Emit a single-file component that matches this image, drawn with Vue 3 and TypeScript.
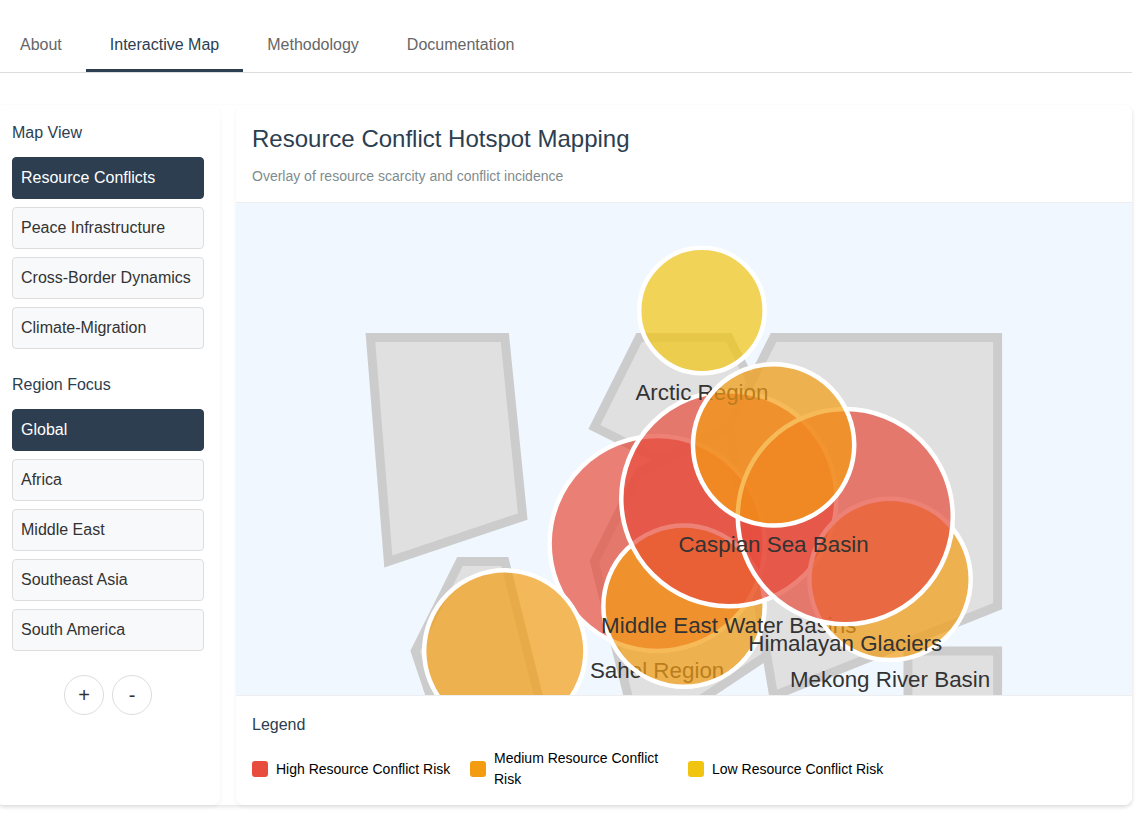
<script setup lang="ts">
import { ref } from 'vue'

type Level = 'high' | 'medium' | 'low'

interface Hotspot {
  name?: string
  x: number
  y: number
  r: number
  level: Level
}

const tabs: string[] = ['About', 'Interactive Map', 'Methodology', 'Documentation']
const views: string[] = ['Resource Conflicts', 'Peace Infrastructure', 'Cross-Border Dynamics', 'Climate-Migration']
const regions: string[] = ['Global', 'Africa', 'Middle East', 'Southeast Asia', 'South America']

const activeTab = ref('Interactive Map')
const activeView = ref('Resource Conflicts')
const activeRegion = ref('Global')

const continents: string[] = [
  '150,150 300,150 320,350 170,400',
  '250,400 300,400 350,600 250,650 200,500',
  '450,150 550,150 600,250 500,300 400,250',
  '450,300 550,250 600,500 450,600 400,400',
  '600,150 850,150 850,450 600,550 550,250',
  '750,500 850,500 850,600 750,600',
]

const hotspots: Hotspot[] = [
  { name: 'Sahel Region', x: 470, y: 380, r: 120, level: 'high' },
  { x: 500, y: 450, r: 90, level: 'medium' },
  { name: 'Middle East Water Basins', x: 550, y: 330, r: 120, level: 'high' },
  { name: 'Mekong River Basin', x: 730, y: 420, r: 90, level: 'medium' },
  { name: 'Himalayan Glaciers', x: 680, y: 350, r: 120, level: 'high' },
  { x: 300, y: 500, r: 90, level: 'medium' },
  { name: 'Arctic Region', x: 520, y: 120, r: 70, level: 'low' },
  { name: 'Caspian Sea Basin', x: 600, y: 270, r: 90, level: 'medium' },
]

const legend: { level: Level; label: string }[] = [
  { level: 'high', label: 'High Resource Conflict Risk' },
  { level: 'medium', label: 'Medium Resource Conflict Risk' },
  { level: 'low', label: 'Low Resource Conflict Risk' },
]
</script>

<template>
  <div class="page">
    <nav class="tabs">
      <button
        v-for="tab in tabs"
        :key="tab"
        type="button"
        class="tab"
        :class="{ active: tab === activeTab }"
        @click="activeTab = tab"
      >{{ tab }}</button>
    </nav>

    <div class="layout">
      <aside class="sidebar">
        <section class="group">
          <h3 class="heading">Map View</h3>
          <button
            v-for="view in views"
            :key="view"
            type="button"
            class="option"
            :class="{ active: view === activeView }"
            @click="activeView = view"
          >{{ view }}</button>
        </section>
        <section class="group">
          <h3 class="heading">Region Focus</h3>
          <button
            v-for="region in regions"
            :key="region"
            type="button"
            class="option"
            :class="{ active: region === activeRegion }"
            @click="activeRegion = region"
          >{{ region }}</button>
        </section>
        <div class="zoom">
          <button type="button" class="round">+</button>
          <button type="button" class="round">-</button>
        </div>
      </aside>

      <main class="panel">
        <header class="panel-head">
          <h2 class="title">Resource Conflict Hotspot Mapping</h2>
          <p class="subtitle">Overlay of resource scarcity and conflict incidence</p>
        </header>

        <div class="map">
          <svg class="world" viewBox="0 0 1000 600">
            <polygon v-for="points in continents" :key="points" class="land" :points="points" />
            <g v-for="(spot, index) in hotspots" :key="index">
              <circle class="spot" :class="spot.level" :cx="spot.x" :cy="spot.y" :r="spot.r" />
              <text v-if="spot.name" class="spot-label" :x="spot.x" :y="spot.y + spot.r + 30">{{ spot.name }}</text>
            </g>
          </svg>
        </div>

        <footer class="legend">
          <h3 class="heading">Legend</h3>
          <ul class="legend-list">
            <li v-for="item in legend" :key="item.level" class="legend-item">
              <span class="swatch" :class="item.level"></span>
              <span>{{ item.label }}</span>
            </li>
          </ul>
        </footer>
      </main>
    </div>
  </div>
</template>

<style>
body {
  margin: 0;
  background: #fff;
  overflow-x: hidden;
}
</style>

<style scoped>
.page {
  margin: 0 15px 0 -4px;
  padding: 21px 0 16px;
  font-family: "Liberation Sans", Arial, sans-serif;
  font-size: 16px;
  color: #333;
}

button {
  font: inherit;
  cursor: pointer;
}

.tabs {
  display: flex;
  border-bottom: 1px solid #ddd;
}

.tab {
  padding: 12px 24px;
  border: 0;
  border-bottom: 3px solid transparent;
  background: none;
  line-height: 24px;
  color: #666;
}

.tab.active {
  color: #2c3e50;
  border-bottom-color: #2c3e50;
}

.layout {
  display: flex;
  gap: 16px;
  margin-top: 32px;
  border-radius: 8px;
  box-shadow: 0 2px 4px rgba(0, 0, 0, 0.1);
}

.sidebar,
.panel {
  box-sizing: border-box;
  border-radius: 8px;
  background: #fff;
  box-shadow: 0 2px 4px rgba(0, 0, 0, 0.05);
}

.sidebar {
  flex: 0 0 224px;
  padding: 16px;
}

.group {
  display: flex;
  flex-direction: column;
  gap: 8px;
  margin-bottom: 24px;
}

.heading {
  margin: 0 0 4px;
  font-size: 16px;
  font-weight: 400;
  line-height: 24px;
  color: #2c3e50;
}

.option {
  padding: 8px;
  border: 1px solid #ddd;
  border-radius: 4px;
  background: #f8f9fa;
  line-height: 24px;
  text-align: left;
  white-space: nowrap;
  color: #333;
}

.option.active {
  border-color: #2c3e50;
  background: #2c3e50;
  color: #fff;
}

.zoom {
  display: flex;
  justify-content: center;
  gap: 8px;
}

.round {
  width: 40px;
  height: 40px;
  padding: 0;
  border: 1px solid #ddd;
  border-radius: 50%;
  background: #fff;
  font-size: 20px;
  color: #333;
}

.panel {
  flex: 1;
  min-width: 0;
  overflow: hidden;
}

.panel-head {
  padding: 16px 16px 14px;
  border-bottom: 1px solid #eee;
}

.title {
  margin: 0 0 8px;
  font-size: 24px;
  font-weight: 400;
  line-height: 36px;
  color: #2c3e50;
}

.subtitle {
  margin: 0;
  font-size: 14px;
  line-height: 23px;
  color: #7f8c8d;
}

.map {
  height: 492px;
  overflow: hidden;
  background: #f0f7ff;
}

.world {
  display: block;
  width: 100%;
}

.land {
  fill: #e0e0e0;
  stroke: #ccc;
  stroke-width: 10;
}

.spot {
  stroke: #fff;
  stroke-width: 5;
  fill-opacity: 0.7;
}

.spot.high {
  fill: #e74c3c;
}

.spot.medium {
  fill: #f39c12;
}

.spot.low {
  fill: #f1c40f;
}

.spot-label {
  font-size: 25px;
  text-anchor: middle;
  fill: #333;
}

.legend {
  padding: 16px 16px 15px;
  border-top: 1px solid #eee;
}

.legend-list {
  display: grid;
  grid-template-columns: repeat(auto-fill, minmax(200px, 1fr));
  gap: 8px;
  margin: 10px 0 0;
  padding: 0;
  list-style: none;
}

.legend .heading {
  margin: 0;
  line-height: 26px;
}

.legend-item {
  display: flex;
  align-items: center;
  gap: 8px;
  font-size: 14px;
  line-height: 21px;
  color: #000;
}

.swatch {
  flex: none;
  width: 16px;
  height: 16px;
  border-radius: 3px;
}

.swatch.high {
  background: #e74c3c;
}

.swatch.medium {
  background: #f39c12;
}

.swatch.low {
  background: #f1c40f;
}
</style>
